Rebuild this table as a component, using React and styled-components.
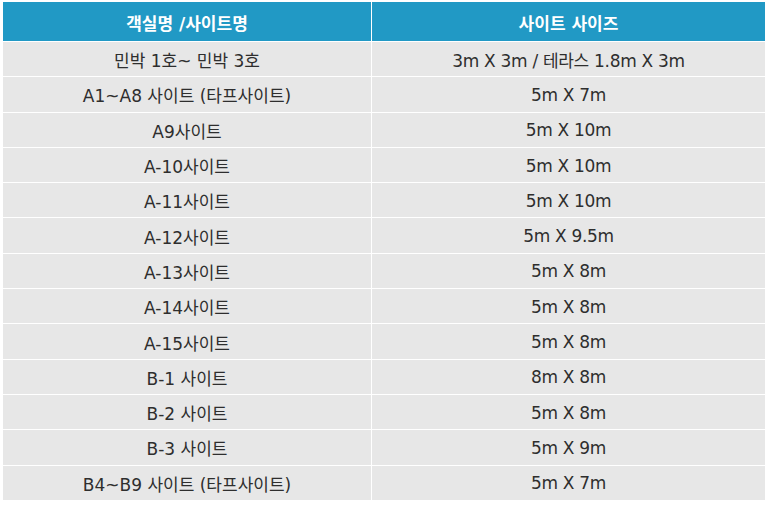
import styled, { createGlobalStyle } from "styled-components";

const GlobalStyle = createGlobalStyle`
  html, body {
    margin: 0;
    padding: 0;
    background: #ffffff;
  }
  body {
    font-family: "DejaVu Sans", "Noto Sans CJK KR", sans-serif;
  }
`;

const rows = [
  ["민박 1호~ 민박 3호", "3m X 3m / 테라스 1.8m X 3m"],
  ["A1~A8 사이트 (타프사이트)", "5m X 7m"],
  ["A9사이트", "5m X 10m"],
  ["A-10사이트", "5m X 10m"],
  ["A-11사이트", "5m X 10m"],
  ["A-12사이트", "5m X 9.5m"],
  ["A-13사이트", "5m X 8m"],
  ["A-14사이트", "5m X 8m"],
  ["A-15사이트", "5m X 8m"],
  ["B-1 사이트", "8m X 8m"],
  ["B-2 사이트", "5m X 8m"],
  ["B-3 사이트", "5m X 9m"],
  ["B4~B9 사이트 (타프사이트)", "5m X 7m"],
];

const Wrap = styled.div`
  padding: 2px 0 0 3px;
`;

const Table = styled.div`
  width: 762px;
  display: grid;
  grid-template-columns: 368px 1fr;
  grid-template-rows: 39px repeat(13, 34.3px);
  gap: 1px;
  background: #ffffff;
`;

// name column is mostly hangul, size column mostly latin -> tighter tracking
const Cell = styled.div`
  display: flex;
  align-items: center;
  justify-content: center;
  padding-top: 1px;
  background: ${(p) => (p.$head ? "#2199c5" : "#e7e7e7")};
  color: ${(p) => (p.$head ? "#ffffff" : "#2e2e2e")};
  font-size: 17px;
  letter-spacing: ${(p) => (p.$tight ? "-0.3px" : "0")};
  font-weight: ${(p) => (p.$head ? 700 : 400)};
  white-space: nowrap;
`;

export default function App() {
  return (
    <>
      <GlobalStyle />
      <Wrap>
        <Table>
          <Cell $head>객실명 /사이트명</Cell>
          <Cell $head>사이트 사이즈</Cell>
          {rows.map(([name, size], i) => [
            <Cell key={"n" + i}>{name}</Cell>,
            <Cell key={"s" + i} $tight>
              {size}
            </Cell>,
          ])}
        </Table>
      </Wrap>
    </>
  );
}
